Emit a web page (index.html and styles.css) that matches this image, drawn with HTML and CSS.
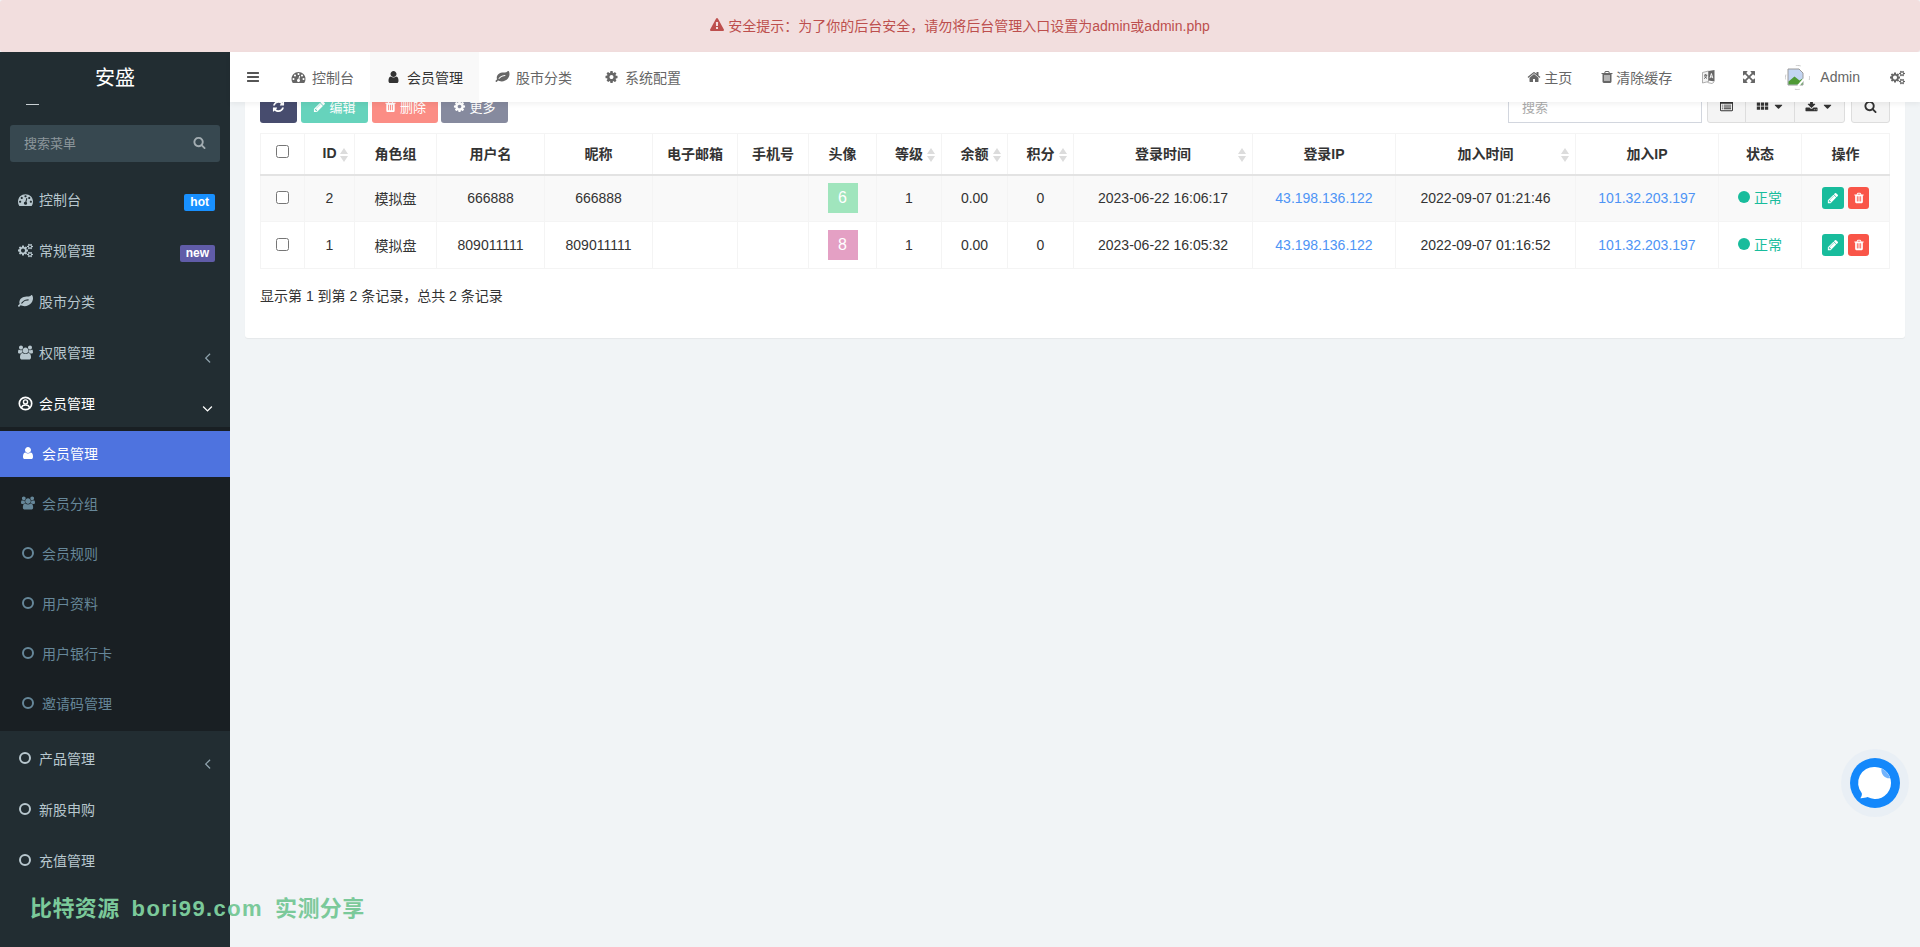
FILE: index.html
```html
<!DOCTYPE html>
<html lang="zh-CN">

<head>
    <meta charset="UTF-8">
    <title>会员管理</title>
    <link rel="stylesheet" href="styles.css">
</head>

<body>
    <svg class="sprite" xmlns="http://www.w3.org/2000/svg">
        <symbol id="i-search" viewBox="0 0 1792 1792"><path d="M1216 832q0-185-131.500-316.500t-316.500-131.500-316.500 131.500-131.500 316.500 131.500 316.500 316.500 131.500 316.500-131.500 131.500-316.500zm512 832q0 52-38 90t-90 38q-54 0-90-38l-343-342q-179 124-399 124-143 0-273.500-55.500t-225-150-150-225-55.500-273.500 55.500-273.500 150-225 225-150 273.500-55.500 273.500 55.500 225 150 150 225 55.500 273.500q0 220-124 399l343 343q37 37 37 90z"/></symbol>
        <symbol id="i-bars" viewBox="0 0 1792 1792"><path d="M1664 1344v128q0 26-19 45t-45 19h-1408q-26 0-45-19t-19-45v-128q0-26 19-45t45-19h1408q26 0 45 19t19 45zm0-512v128q0 26-19 45t-45 19h-1408q-26 0-45-19t-19-45v-128q0-26 19-45t45-19h1408q26 0 45 19t19 45zm0-512v128q0 26-19 45t-45 19h-1408q-26 0-45-19t-19-45v-128q0-26 19-45t45-19h1408q26 0 45 19t19 45z"/></symbol>
        <symbol id="i-user" viewBox="0 0 1792 1792"><path d="M1536 1399q0 109-62.500 187t-150.500 78h-854q-88 0-150.500-78t-62.500-187q0-85 8.500-160.500t31.500-152 58.500-131 94-89 134.500-34.500q131 128 313 128t313-128q76 0 134.500 34.500t94 89 58.500 131 31.500 152 8.500 160.500zm-256-887q0 159-112.500 271.500t-271.500 112.500-271.500-112.500-112.500-271.500 112.500-271.500 271.500-112.500 271.500 112.500 112.500 271.500z"/></symbol>
        <symbol id="i-home" viewBox="0 0 1792 1792"><path d="M1472 992v480q0 26-19 45t-45 19h-384v-384h-256v384h-384q-26 0-45-19t-19-45v-480q0-1 .5-3t.5-3l575-474 575 474q1 2 1 6zm223-69l-62 74q-8 9-21 11h-3q-13 0-21-7l-692-577-692 577q-12 8-24 7-13-2-21-11l-62-74q-8-10-7-23.500t11-21.500l719-599q32-26 76-26t76 26l244 204v-195q0-14 9-23t23-9h192q14 0 23 9t9 23v408l219 182q10 8 11 21.500t-7 23.500z"/></symbol>
        <symbol id="i-trash" viewBox="0 0 1792 1792"><path d="M704 1376v-704q0-14-9-23t-23-9h-64q-14 0-23 9t-9 23v704q0 14 9 23t23 9h64q14 0 23-9t9-23zm256 0v-704q0-14-9-23t-23-9h-64q-14 0-23 9t-9 23v704q0 14 9 23t23 9h64q14 0 23-9t9-23zm256 0v-704q0-14-9-23t-23-9h-64q-14 0-23 9t-9 23v704q0 14 9 23t23 9h64q14 0 23-9t9-23zm-544-992h448l-48-117q-7-9-17-11h-317q-10 2-17 11zm928 32v64q0 14-9 23t-23 9h-96v948q0 83-47 143.500t-113 60.500h-832q-66 0-113-58.500t-47-141.500v-952h-96q-14 0-23-9t-9-23v-64q0-14 9-23t23-9h309l70-167q15-37 54-63t79-26h320q40 0 79 26t54 63l70 167h309q14 0 23 9t9 23z"/></symbol>
        <symbol id="i-pencil" viewBox="0 0 1792 1792"><path d="M491 1536l91-91-235-235-91 91v107h128v128h107zm523-928q0-22-22-22-10 0-17 7l-542 542q-7 7-7 17 0 22 22 22 10 0 17-7l542-542q7-7 7-17zm-54-192l416 416-832 832h-416v-416zm683 96q0 53-37 90l-166 166-416-416 166-165q36-38 90-38 53 0 91 38l235 234q37 39 37 91z"/></symbol>
        <symbol id="i-caret" viewBox="0 0 1792 1792"><path d="M1408 704q0 26-19 45l-448 448q-19 19-45 19t-45-19l-448-448q-19-19-19-45t19-45 45-19h896q26 0 45 19t19 45z"/></symbol>
        <symbol id="i-left" viewBox="0 0 1792 1792"><path d="M1203 544q0 13-10 23l-393 393 393 393q10 10 10 23t-10 23l-50 50q-10 10-23 10t-23-10l-466-466q-10-10-10-23t10-23l466-466q10-10 23-10t23 10l50 50q10 10 10 23z"/></symbol>
        <symbol id="i-down" viewBox="0 0 1792 1792"><path d="M1395 736q0 13-10 23l-466 466q-10 10-23 10t-23-10l-466-466q-10-10-10-23t10-23l50-50q10-10 23-10t23 10l393 393 393-393q10-10 23-10t23 10l50 50q10 10 10 23z"/></symbol>
        <symbol id="i-warning" viewBox="0 0 1792 1792"><path d="M1024 1375v-190q0-14-9.500-23.500t-22.500-9.500h-192q-13 0-22.500 9.500t-9.500 23.500v190q0 14 9.500 23.500t22.500 9.500h192q13 0 22.500-9.500t9.500-23.500zm-2-374l18-459q0-12-10-19-13-11-24-11h-220q-11 0-24 11-10 7-10 21l17 457q0 10 10 16.500t24 6.500h185q14 0 23.500-6.500t10.500-16.500zm-14-934l768 1408q35 63-2 126-17 29-46.500 46t-63.500 17h-1536q-34 0-63.500-17t-46.500-46q-37-63-2-126l768-1408q17-31 47-49t65-18 65 18 47 49z"/></symbol>
        <symbol id="i-cog" viewBox="0 0 1792 1792"><path d="M1152 896q0-106-75-181t-181-75-181 75-75 181 75 181 181 75 181-75 75-181zm512-109v222q0 12-8 23t-20 13l-185 28q-19 54-39 91 35 50 107 138 10 12 10 25t-9 23q-27 37-99 108t-94 71q-12 0-26-9l-138-108q-44 23-91 38-16 136-29 186-7 28-36 28h-222q-14 0-24.500-8.500t-11.500-21.500l-28-184q-49-16-90-37l-141 107q-10 9-25 9-14 0-25-11-126-114-165-168-7-10-7-23 0-12 8-23 15-21 51-66.500t54-70.500q-27-50-41-99l-183-27q-13-2-21-12.500t-8-23.500v-222q0-12 8-23t19-13l186-28q14-46 39-92-40-57-107-138-10-12-10-24 0-10 9-23 26-36 98.500-107.500t94.500-71.500q13 0 26 10l138 107q44-23 91-38 16-136 29-186 7-28 36-28h222q14 0 24.500 8.500t11.500 21.500l28 184q49 16 90 37l142-107q9-9 24-9 13 0 25 10 129 119 165 170 7 8 7 22 0 12-8 23-15 21-51 66.500t-54 70.500q26 50 41 98l183 28q13 2 21 12.500t8 23.500z"/></symbol>
        <symbol id="i-users" viewBox="0 0 1920 1792"><path d="M593 896q-162 5-265 128h-134q-82 0-138-40.500t-56-118.500q0-353 124-353 6 0 43.500 21t97.500 42.500 119 21.500q67 0 133-23-5 37-5 66 0 139 81 256zm1071 637q0 120-73 189.500t-194 69.500h-874q-121 0-194-69.500t-73-189.500q0-53 3.500-103.500t14-109 26.500-108.500 43-97.500 62-81 85.500-53.500 111.500-20q10 0 43 21.500t73 48 107 48 135 21.500 135-21.500 107-48 73-48 43-21.500q61 0 111.500 20t85.500 53.500 62 81 43 97.500 26.500 108.500 14 109 3.500 103.500zm-1024-1277q0 106-75 181t-181 75-181-75-75-181 75-181 181-75 181 75 75 181zm704 384q0 159-112.500 271.500t-271.500 112.500-271.500-112.500-112.500-271.500 112.500-271.500 271.500-112.500 271.500 112.500 112.500 271.500zm576 225q0 78-56 118.500t-138 40.500h-134q-103-123-265-128 81-117 81-256 0-29-5-66 66 23 133 23 59 0 119-21.500t97.500-42.500 43.500-21q124 0 124 353zm-128-609q0 106-75 181t-181 75-181-75-75-181 75-181 181-75 181 75 75 181z"/></symbol>
        <symbol id="i-dash" viewBox="0 0 1792 1792"><path d="M384 1152q0-53-37.500-90.500t-90.500-37.500-90.500 37.500-37.500 90.500 37.500 90.500 90.500 37.500 90.500-37.500 37.500-90.500zm192-448q0-53-37.500-90.500t-90.500-37.500-90.500 37.500-37.500 90.500 37.500 90.500 90.500 37.500 90.500-37.500 37.500-90.500zm428 481l101-382q6-26-7.500-48.500t-38.500-29.500-48 6.500-30 39.500l-101 382q-60 5-107 43.500t-63 98.500q-20 77 20 146t117 89 146-20 89-117q16-60-6-117t-72-91zm660-33q0-53-37.500-90.500t-90.500-37.500-90.500 37.500-37.500 90.500 37.500 90.500 90.500 37.500 90.500-37.500 37.500-90.500zm-640-640q0-53-37.500-90.500t-90.500-37.500-90.500 37.500-37.500 90.500 37.500 90.500 90.500 37.500 90.500-37.500 37.500-90.500zm448 192q0-53-37.500-90.500t-90.500-37.500-90.500 37.500-37.500 90.500 37.500 90.500 90.500 37.500 90.500-37.500 37.500-90.500zm320 448q0 261-141 483-19 29-54 29h-1402q-35 0-54-29-141-221-141-483 0-182 71-348t191-286 286-191 348-71 348 71 286 191 191 286 71 348z"/></symbol>
        <symbol id="i-leaf" viewBox="0 0 1792 1792"><path d="M1280 704q0-26-19-45t-45-19q-172 0-318 49.500t-259.500 134-235.500 219.500q-19 21-19 45 0 26 19 45t45 19q24 0 45-19 27-24 74-71t67-66q137-124 268.500-176t313.500-52q26 0 45-19t19-45zm512-198q0 95-20 193-46 224-184.500 383t-357.500 268q-214 108-438 108-148 0-286-47-15-5-88-42t-96-37q-16 0-39.500 32t-45 70-52.500 70-60 32q-43 0-63.500-17.500t-45.500-59.500q-2-4-6-11t-5.500-10-3-9.500-1.500-13.500q0-35 31-73.500t68-65.500 68-56 31-48q0-4-14-38t-16-44q-9-51-9-104 0-115 43.500-220t119-184.500 170.500-139 204-95.500q55-18 145-25.500t179.500-9 178.500-6 163.500-24 113.500-56.500l29.500-29.500 29.500-28 27-20 36.500-16 43.500-4.500q39 0 70.500 46t47.500 112 24 124 8 96z"/></symbol>
        <symbol id="i-cogs" viewBox="0 0 1920 1792"><path d="M896 896q0-106-75-181t-181-75-181 75-75 181 75 181 181 75 181-75 75-181zm768 512q0-52-38-90t-90-38-90 38-38 90q0 53 37.500 90.500t90.500 37.500 90.500-37.500 37.500-90.500zm0-1024q0-52-38-90t-90-38-90 38-38 90q0 53 37.500 90.500t90.500 37.500 90.500-37.500 37.500-90.500zm-384 421v185q0 10-7 19.500t-16 10.500l-155 24q-11 35-32 76 34 48 90 115 7 11 7 20 0 12-7 19-23 30-82.500 89.500t-78.500 59.500q-11 0-21-7l-115-90q-37 19-77 31-11 108-23 155-7 24-30 24h-186q-11 0-20-7.500t-10-17.500l-23-153q-34-10-75-31l-118 89q-7 7-20 7-11 0-21-8-144-133-144-160 0-9 7-19 10-14 41-53t47-61q-23-44-35-82l-152-24q-10-1-17-9.500t-7-19.500v-185q0-10 7-19.500t16-10.500l155-24q11-35 32-76-34-48-90-115-7-11-7-20 0-12 7-20 22-30 82-89t79-59q11 0 21 7l115 90q34-18 77-32 11-108 23-154 7-24 30-24h186q11 0 20 7.500t10 17.500l23 153q34 10 75 31l118-89q8-7 20-7 11 0 21 8 144 133 144 160 0 8-7 19-12 16-42 54t-45 60q23 48 34 82l152 23q10 2 17 10.500t7 19.500zm640 533v140q0 16-149 31-12 27-30 52 51 113 51 138 0 4-4 7-122 71-124 71-8 0-46-47t-52-68q-20 2-30 2t-30-2q-14 21-52 68t-46 47q-2 0-124-71-4-3-4-7 0-25 51-138-18-25-30-52-149-15-149-31v-140q0-16 149-31 13-29 30-52-51-113-51-138 0-4 4-7 4-2 35-20t59-34 30-16q8 0 46 46.500t52 67.500q20-2 30-2t30 2q51-71 92-112l6-2q4 0 124 70 4 3 4 7 0 25-51 138 17 23 30 52 149 15 149 31zm0-1024v140q0 16-149 31-12 27-30 52 51 113 51 138 0 4-4 7-122 71-124 71-8 0-46-47t-52-68q-20 2-30 2t-30-2q-14 21-52 68t-46 47q-2 0-124-71-4-3-4-7 0-25 51-138-18-25-30-52-149-15-149-31v-140q0-16 149-31 13-29 30-52-51-113-51-138 0-4 4-7 4-2 35-20t59-34 30-16q8 0 46 46.500t52 67.500q20-2 30-2t30 2q51-71 92-112l6-2q4 0 124 70 4 3 4 7 0 25-51 138 17 23 30 52 149 15 149 31z"/></symbol>
        <symbol id="i-refresh" viewBox="0 0 1792 1792"><path d="M1639 1056q0 5-1 7-64 268-268 434.500t-478 166.500q-146 0-282.500-55t-243.500-157l-129 129q-19 19-45 19t-45-19-19-45v-448q0-26 19-45t45-19h448q26 0 45 19t19 45-19 45l-137 137q71 66 161 102t187 36q134 0 250-65t186-179q11-17 53-117 8-23 30-23h192q13 0 22.500 9.500t9.500 22.500zm25-800v448q0 26-19 45t-45 19h-448q-26 0-45-19t-19-45 19-45l138-138q-148-137-349-137-134 0-250 65t-186 179q-11 17-53 117-8 23-30 23h-199q-13 0-22.500-9.500t-9.500-22.500v-7q65-268 270-434.500t480-166.500q146 0 284 55.500t245 156.500l130-129q19-19 45-19t45 19 19 45z"/></symbol>
        <symbol id="i-list" viewBox="0 0 1792 1792"><path d="M384 1184v64q0 13-9.500 22.500t-22.500 9.500h-64q-13 0-22.500-9.500t-9.500-22.500v-64q0-13 9.500-22.500t22.500-9.500h64q13 0 22.500 9.500t9.500 22.500zm0-256v64q0 13-9.500 22.500t-22.500 9.500h-64q-13 0-22.500-9.500t-9.500-22.500v-64q0-13 9.500-22.500t22.500-9.500h64q13 0 22.500 9.500t9.500 22.500zm0-256v64q0 13-9.500 22.500t-22.500 9.500h-64q-13 0-22.500-9.500t-9.500-22.500v-64q0-13 9.500-22.500t22.500-9.500h64q13 0 22.500 9.500t9.500 22.500zm1152 512v64q0 13-9.500 22.500t-22.500 9.500h-960q-13 0-22.500-9.500t-9.500-22.500v-64q0-13 9.500-22.500t22.500-9.500h960q13 0 22.500 9.500t9.500 22.500zm0-256v64q0 13-9.500 22.500t-22.500 9.500h-960q-13 0-22.500-9.500t-9.500-22.500v-64q0-13 9.500-22.500t22.500-9.500h960q13 0 22.500 9.500t9.500 22.500zm0-256v64q0 13-9.500 22.500t-22.500 9.500h-960q-13 0-22.500-9.500t-9.500-22.500v-64q0-13 9.500-22.500t22.500-9.500h960q13 0 22.500 9.500t9.500 22.500zm128 704v-832q0-13-9.500-22.500t-22.500-9.500h-1472q-13 0-22.500 9.500t-9.500 22.500v832q0 13 9.500 22.500t22.500 9.500h1472q13 0 22.500-9.500t9.500-22.500zm128-1088v1088q0 66-47 113t-113 47h-1472q-66 0-113-47t-47-113v-1088q0-66 47-113t113-47h1472q66 0 113 47t47 113z"/></symbol>
        <symbol id="i-th" viewBox="0 0 16 16"><path d="M1 3h4v4h-4zM6 3h4v4h-4zM11 3h4v4h-4zM1 8h4v4h-4zM6 8h4v4h-4zM11 8h4v4h-4z"/></symbol>
        <symbol id="i-download" viewBox="0 0 1792 1792"><path d="M1344 1344q0-26-19-45t-45-19-45 19-19 45 19 45 45 19 45-19 19-45zm256 0q0-26-19-45t-45-19-45 19-19 45 19 45 45 19 45-19 19-45zm128-224v320q0 40-28 68t-68 28h-1472q-40 0-68-28t-28-68v-320q0-40 28-68t68-28h465l135 136q58 56 136 56t136-56l136-136h464q40 0 68 28t28 68zm-325-569q17 41-14 70l-448 448q-18 19-45 19t-45-19l-448-448q-31-29-14-70 17-39 59-39h256v-448q0-26 19-45t45-19h256q26 0 45 19t19 45v448h256q42 0 59 39z"/></symbol>
        <symbol id="i-expand" viewBox="0 0 1792 1792"><path d="M1283 541l-355 355 355 355 144-144q29-31 70-14 39 17 39 59v448q0 26-19 45t-45 19h-448q-42 0-59-40-17-39 14-69l144-144-355-355-355 355 144 144q31 30 14 69-17 40-59 40h-448q-26 0-45-19t-19-45v-448q0-42 40-59 39-17 69 14l144 144 355-355-355-355-144 144q-19 19-45 19-12 0-24-5-40-17-40-59v-448q0-26 19-45t45-19h448q42 0 59 40 17 39-14 69l-144 144 355 355 355-355-144-144q-31-30-14-69 17-40 59-40h448q26 0 45 19t19 45v448q0 42-39 59-13 5-25 5-26 0-45-19z"/></symbol>
        <symbol id="i-lang" viewBox="0 0 13 14">
            <path d="M.5 2.500l6-1.500v10.500l-6 1.500z" fill="#f2f2f2" stroke="#9a9a9a" stroke-width=".8"/>
            <path d="M2 5.200h3.200M3.600 4.200v1M4.700 5.400c-.5 1.600-1.500 2.600-2.700 3.200M2.700 6.200c.4 1 1.200 1.800 2.300 2.200" fill="none" stroke="#555" stroke-width=".9"/>
            <path d="M6.500 1l6-1v11.500l-6-.9z" fill="#666"/>
            <path d="M8 8.200l1.400-4.700 1.400 4.700M8.500 6.900h1.800" fill="none" stroke="#fff" stroke-width=".9"/>
            <path d="M5.500 12.500l4.500 1 2-1.500" fill="none" stroke="#9a9a9a" stroke-width=".8"/>
        </symbol>
        <symbol id="i-user-circle" viewBox="0 0 16 16">
            <circle cx="8" cy="8" r="6.600" fill="none" stroke="currentColor" stroke-width="1.800"/>
            <circle cx="8" cy="6.300" r="2.200" fill="none" stroke="currentColor" stroke-width="1.500"/>
            <path d="M3.600 12.600c.5-2 2.300-3 4.400-3s3.900 1 4.400 3" fill="none" stroke="currentColor" stroke-width="1.600"/>
        </symbol>
        <symbol id="i-ring" viewBox="0 0 12 12"><circle cx="6" cy="6" r="5" fill="none" stroke="currentColor" stroke-width="2"/></symbol>
        <symbol id="i-sort" viewBox="0 0 8 14"><path d="M4 0l4 6h-8zM4 14l-4-6h8z"/></symbol>
    </svg>

    <div class="alert">
        <svg class="ico ico-14"><use href="#i-warning"/></svg>
        <span>安全提示：为了你的后台安全，请勿将后台管理入口设置为admin或admin.php</span>
    </div>

    <div class="wrapper">
        <aside class="sidebar">
            <div class="logo">安盛</div>
            <div class="panel-cut"></div>
            <div class="menu-search">
                <span>搜索菜单</span>
                <svg class="ico ico-13"><use href="#i-search"/></svg>
            </div>
            <ul class="menu">
                <li class="menu-item">
                    <svg class="ico ico-15"><use href="#i-dash"/></svg><span>控制台</span>
                    <em class="tag tag-hot">hot</em>
                </li>
                <li class="menu-item">
                    <svg class="ico ico-15"><use href="#i-cogs"/></svg><span>常规管理</span>
                    <em class="tag tag-new">new</em>
                </li>
                <li class="menu-item">
                    <svg class="ico ico-15"><use href="#i-leaf"/></svg><span>股市分类</span>
                </li>
                <li class="menu-item">
                    <svg class="ico ico-15"><use href="#i-users"/></svg><span>权限管理</span>
                    <svg class="ico angle"><use href="#i-left"/></svg>
                </li>
                <li class="menu-item open">
                    <svg class="ico ico-15"><use href="#i-user-circle"/></svg><span>会员管理</span>
                    <svg class="ico angle"><use href="#i-down"/></svg>
                </li>
                <li>
                    <ul class="submenu">
                        <li class="sub-item active"><svg class="ico ico-14"><use href="#i-user"/></svg><span>会员管理</span></li>
                        <li class="sub-item"><svg class="ico ico-14"><use href="#i-users"/></svg><span>会员分组</span></li>
                        <li class="sub-item"><svg class="ico ico-12"><use href="#i-ring"/></svg><span>会员规则</span></li>
                        <li class="sub-item"><svg class="ico ico-12"><use href="#i-ring"/></svg><span>用户资料</span></li>
                        <li class="sub-item"><svg class="ico ico-12"><use href="#i-ring"/></svg><span>用户银行卡</span></li>
                        <li class="sub-item"><svg class="ico ico-12"><use href="#i-ring"/></svg><span>邀请码管理</span></li>
                    </ul>
                </li>
                <li class="menu-item">
                    <svg class="ico ico-12"><use href="#i-ring"/></svg><span>产品管理</span>
                    <svg class="ico angle"><use href="#i-left"/></svg>
                </li>
                <li class="menu-item"><svg class="ico ico-12"><use href="#i-ring"/></svg><span>新股申购</span></li>
                <li class="menu-item"><svg class="ico ico-12"><use href="#i-ring"/></svg><span>充值管理</span></li>
            </ul>
        </aside>

        <main class="main">
            <header class="topbar">
                <a class="toggle"><svg class="ico ico-14"><use href="#i-bars"/></svg></a>
                <a class="tab"><svg class="ico ico-14"><use href="#i-dash"/></svg><span>控制台</span></a>
                <a class="tab current"><svg class="ico ico-14"><use href="#i-user"/></svg><span>会员管理</span></a>
                <a class="tab"><svg class="ico ico-14"><use href="#i-leaf"/></svg><span>股市分类</span></a>
                <a class="tab"><svg class="ico ico-14"><use href="#i-cog"/></svg><span>系统配置</span></a>
                <nav class="top-right">
                    <a class="top-link top-home"><svg class="ico ico-14"><use href="#i-home"/></svg><span>主页</span></a>
                    <a class="top-link top-clear"><svg class="ico ico-14"><use href="#i-trash"/></svg><span>清除缓存</span></a>
                    <a class="top-link"><svg class="ico lang"><use href="#i-lang"/></svg></a>
                    <a class="top-link top-full"><svg class="ico ico-14"><use href="#i-expand"/></svg></a>
                    <a class="top-link user">
                        <svg class="avatar-broken" viewBox="0 0 25 25">
                            <circle cx="12.500" cy="12.500" r="12" fill="#fff" stroke="#c8c8c8" stroke-dasharray="5 14" stroke-dashoffset="2.500" pathLength="75"/>
                            <path d="M3 4h11l4 4v12h-15z" fill="#c3d5f2" stroke="#9a9a9a"/>
                            <path d="M3.500 19.500v-3l6-5 5 4 3-2v6z" fill="#4f9a35"/>
                            <path d="M13 21l6-7" stroke="#fff" stroke-width="2"/>
                        </svg>
                        <span>Admin</span>
                    </a>
                    <a class="top-link"><svg class="ico ico-15"><use href="#i-cogs"/></svg></a>
                </nav>
            </header>

            <section class="content">
                <div class="toolbar">
                    <a class="btn btn-refresh"><svg class="ico ico-13"><use href="#i-refresh"/></svg></a>
                    <a class="btn btn-edit"><svg class="ico ico-13"><use href="#i-pencil"/></svg>编辑</a>
                    <a class="btn btn-del"><svg class="ico ico-13"><use href="#i-trash"/></svg>删除</a>
                    <a class="btn btn-more"><svg class="ico ico-13"><use href="#i-cog"/></svg>更多</a>
                    <div class="toolbar-right">
                        <div class="search-input">搜索</div>
                        <div class="btn-group">
                            <a class="tool tool-list"><svg class="ico ico-13"><use href="#i-list"/></svg></a>
                            <a class="tool tool-th"><svg class="ico ico-13"><use href="#i-th"/></svg><svg class="ico caret"><use href="#i-caret"/></svg></a>
                            <a class="tool tool-th"><svg class="ico ico-13"><use href="#i-download"/></svg><svg class="ico caret"><use href="#i-caret"/></svg></a>
                        </div>
                        <a class="tool tool-search"><svg class="ico ico-13"><use href="#i-search"/></svg></a>
                    </div>
                </div>

                <table class="grid">
                    <colgroup>
                        <col><col><col><col><col><col><col><col><col><col><col><col><col><col><col><col><col>
                    </colgroup>
                    <thead>
                        <tr>
                            <th><input type="checkbox"></th>
                            <th>ID<svg class="sort"><use href="#i-sort"/></svg></th>
                            <th>角色组</th>
                            <th>用户名</th>
                            <th>昵称</th>
                            <th>电子邮箱</th>
                            <th>手机号</th>
                            <th>头像</th>
                            <th>等级<svg class="sort"><use href="#i-sort"/></svg></th>
                            <th>余额<svg class="sort"><use href="#i-sort"/></svg></th>
                            <th>积分<svg class="sort"><use href="#i-sort"/></svg></th>
                            <th>登录时间<svg class="sort"><use href="#i-sort"/></svg></th>
                            <th>登录IP</th>
                            <th>加入时间<svg class="sort"><use href="#i-sort"/></svg></th>
                            <th>加入IP</th>
                            <th>状态</th>
                            <th>操作</th>
                        </tr>
                    </thead>
                    <tbody>
                        <tr>
                            <td><input type="checkbox"></td>
                            <td>2</td>
                            <td>模拟盘</td>
                            <td>666888</td>
                            <td>666888</td>
                            <td></td>
                            <td></td>
                            <td><span class="letter letter-green">6</span></td>
                            <td>1</td>
                            <td>0.00</td>
                            <td>0</td>
                            <td>2023-06-22 16:06:17</td>
                            <td><a class="ip">43.198.136.122</a></td>
                            <td>2022-09-07 01:21:46</td>
                            <td><a class="ip">101.32.203.197</a></td>
                            <td><span class="state"><i class="dot"></i>正常</span></td>
                            <td>
                                <div class="ops">
                                    <a class="op op-edit"><svg class="ico ico-12"><use href="#i-pencil"/></svg></a>
                                    <a class="op op-del"><svg class="ico ico-12"><use href="#i-trash"/></svg></a>
                                </div>
                            </td>
                        </tr>
                        <tr>
                            <td><input type="checkbox"></td>
                            <td>1</td>
                            <td>模拟盘</td>
                            <td>809011111</td>
                            <td>809011111</td>
                            <td></td>
                            <td></td>
                            <td><span class="letter letter-pink">8</span></td>
                            <td>1</td>
                            <td>0.00</td>
                            <td>0</td>
                            <td>2023-06-22 16:05:32</td>
                            <td><a class="ip">43.198.136.122</a></td>
                            <td>2022-09-07 01:16:52</td>
                            <td><a class="ip">101.32.203.197</a></td>
                            <td><span class="state"><i class="dot"></i>正常</span></td>
                            <td>
                                <div class="ops">
                                    <a class="op op-edit"><svg class="ico ico-12"><use href="#i-pencil"/></svg></a>
                                    <a class="op op-del"><svg class="ico ico-12"><use href="#i-trash"/></svg></a>
                                </div>
                            </td>
                        </tr>
                    </tbody>
                </table>

                <p class="pager">显示第 1 到第 2 条记录，总共 2 条记录</p>
            </section>
        </main>
    </div>

    <div class="watermark"><span>比特资源</span><span class="wm-url">bori99.com</span><span>实测分享</span></div>

    <div class="chat">
        <svg viewBox="0 0 50 50" class="chat-icon">
            <circle cx="25" cy="25" r="25" fill="#1488fb"/>
            <path d="M25 9a16 16 0 1 1-7.500 30.100c-2 .8-4.500 1.200-7.200 1.100 1.300-1.500 1.800-3.200 1.500-5A16 16 0 0 1 25 9z" fill="#fff"/>
            <path d="M31.500 10.400a16 16 0 0 1 8.700 9.800c-4.800.8-9.800-4.200-8.700-9.800z" fill="#72b3fc"/>
        </svg>
    </div>
</body>

</html>
```

FILE: styles.css
```css
* {
    box-sizing: border-box;
}

html,
body {
    margin: 0;
    height: 947px;
    overflow: hidden;
}

body {
    position: relative;
    font-family: "Liberation Sans", "Noto Sans CJK SC", sans-serif;
    font-size: 14px;
    color: #333;
    background: #f1f4f6;
}

ul {
    list-style: none;
    margin: 0;
    padding: 0;
}

.sprite {
    display: none;
}

.ico {
    display: inline-block;
    flex: none;
    fill: currentColor;
}

.ico-12 {
    width: 12px;
    height: 12px;
}

.ico-13 {
    width: 13px;
    height: 13px;
}

.ico-14 {
    width: 14px;
    height: 14px;
}

.ico-15 {
    width: 15px;
    height: 15px;
}

/* top warning */
.alert {
    height: 52px;
    padding-bottom: 2px;
    display: flex;
    align-items: center;
    justify-content: center;
    gap: 4px;
    color: #bd4f4d;
    background: #f2dede;
    border-radius: 3px;
}

.wrapper {
    display: flex;
    height: 895px;
}

/* sidebar */
.sidebar {
    width: 230px;
    flex: none;
    background: #222d32;
    color: #b8c7ce;
}

.logo {
    height: 50px;
    line-height: 52px;
    text-align: center;
    font-size: 20px;
    color: #fff;
}

.panel-cut {
    width: 13px;
    height: 1px;
    margin: 2px 0 0 26px;
    background: #c9d0d4;
}

.menu-search {
    display: flex;
    align-items: center;
    justify-content: space-between;
    height: 37px;
    margin: 20px 10px 10px;
    padding: 0 14px 2px;
    font-size: 13px;
    color: #8d979c;
    background: #374850;
    border-radius: 3px;
}

.menu-search .ico {
    color: #a3adb2;
}

.menu-item {
    display: flex;
    align-items: center;
    height: 51px;
    padding: 3px 14px 0 18px;
}

.menu-item > .ico:first-child {
    margin-right: 6px;
}

.menu-item > .ico-12:first-child {
    margin: 0 8px 0 1px;
}

.menu-item.open {
    color: #fff;
}

.angle {
    width: 17px;
    height: 17px;
    margin-left: auto;
    transform: translateY(5px);
    color: #8fa3ad;
}

.open .angle {
    color: #fff;
}

.tag {
    margin-left: auto;
    margin-right: 1px;
    height: 17px;
    line-height: 17px;
    padding: 0 6px;
    font-style: normal;
    font-weight: bold;
    font-size: 12px;
    color: #fff;
    border-radius: 2px;
    transform: translateY(3px);
}

.tag-hot {
    background: #1890ff;
}

.tag-new {
    background: #605ca8;
}

.submenu {
    padding: 4px 0;
    background: #191f23;
}

.sub-item {
    display: flex;
    align-items: center;
    height: 46px;
    margin-bottom: 4px;
    padding: 0 0 2px 21px;
    color: #668799;
}

.sub-item:last-child {
    margin-bottom: 0;
}

.sub-item .ico {
    margin-right: 7px;
}

.sub-item .ico-12 {
    margin: 0 8px 0 1px;
}

.sub-item.active {
    color: #fff;
    background: #4e73df;
}

/* main column */
.main {
    flex: 1;
    min-width: 0;
    display: flex;
    flex-direction: column;
}

.topbar {
    position: relative;
    z-index: 2;
    display: flex;
    align-items: center;
    height: 50px;
    color: #666;
    background: #fff;
    box-shadow: 0 2px 5px rgba(0, 0, 0, 0.06);
}

.toggle {
    display: flex;
    align-items: center;
    width: 45px;
    padding-left: 16px;
    color: #555;
}

.tab {
    display: flex;
    align-items: center;
    height: 50px;
    padding: 0 16px 0 15px;
    gap: 5px;
}

.tab .ico {
    width: 17px;
}

.tab.current {
    color: #333;
    background: #f9f9f9;
}

.top-right {
    display: flex;
    align-items: center;
    margin-left: auto;
}

.top-link {
    display: flex;
    align-items: center;
    gap: 4px;
    height: 50px;
    padding: 0 15px;
}

.top-home {
    gap: 3px;
    padding-left: 16px;
}

.top-clear {
    gap: 2px;
    padding-left: 13px;
}

.top-full {
    padding: 0 13px;
}

.lang {
    width: 13px;
    height: 14px;
}

.user {
    gap: 10px;
}

.avatar-broken {
    width: 25px;
    height: 25px;
}

.content {
    width: 1660px;
    height: 236px;
    margin-left: 15px;
    padding: 0 15px;
    background: #fff;
    border-radius: 0 0 3px 3px;
    box-shadow: 0 1px 1px rgba(0, 0, 0, 0.05);
}

/* toolbar is scrolled under the topbar */
.toolbar {
    display: flex;
    align-items: flex-end;
    gap: 4px;
    height: 21px;
    overflow: hidden;
}

.btn {
    display: flex;
    flex: none;
    align-items: center;
    justify-content: center;
    gap: 3px;
    height: 31px;
    padding-bottom: 2px;
    font-size: 13px;
    color: #fff;
    border-radius: 3px;
}

.btn-refresh {
    width: 37px;
    background: #474c6e;
}

.btn-edit {
    width: 67px;
    background: #66d3bc;
}

.btn-del {
    width: 66px;
    background: #fb8d85;
}

.btn-more {
    width: 67px;
    margin-left: -1px;
    background: #868a9e;
}

.toolbar-right {
    display: flex;
    align-items: flex-end;
    margin-left: auto;
}

.search-input {
    display: flex;
    align-items: center;
    width: 194px;
    height: 31px;
    padding: 0 0 2px 13px;
    font-size: 13px;
    color: #aaa;
    background: #fff;
    border: 1px solid #d2d6de;
}

.btn-group {
    display: flex;
    margin-left: 5px;
}

.tool {
    display: flex;
    align-items: center;
    justify-content: center;
    gap: 3px;
    height: 31px;
    padding-bottom: 2px;
    color: #333;
    background: #f4f4f4;
    border: 1px solid #ddd;
}

.tool-list {
    width: 39px;
    border-radius: 3px 0 0 3px;
}

.tool-th {
    width: 50px;
    margin-left: -1px;
}

.tool-th:last-child {
    width: 51px;
    border-radius: 0 3px 3px 0;
}

.tool-search {
    width: 39px;
    margin-left: 6px;
    border-radius: 3px;
}

.caret {
    width: 13px;
    height: 13px;
}

/* table */
.grid {
    width: 1630px;
    margin-top: 10px;
    table-layout: fixed;
    border-collapse: collapse;
    color: #333;
}

.grid col:nth-child(1) { width: 44px; }
.grid col:nth-child(2) { width: 50px; }
.grid col:nth-child(3) { width: 82px; }
.grid col:nth-child(4) { width: 108px; }
.grid col:nth-child(5) { width: 108px; }
.grid col:nth-child(6) { width: 85px; }
.grid col:nth-child(7) { width: 71px; }
.grid col:nth-child(8) { width: 68px; }
.grid col:nth-child(9) { width: 65px; }
.grid col:nth-child(10) { width: 66px; }
.grid col:nth-child(11) { width: 66px; }
.grid col:nth-child(12) { width: 179px; }
.grid col:nth-child(13) { width: 143px; }
.grid col:nth-child(14) { width: 180px; }
.grid col:nth-child(15) { width: 143px; }
.grid col:nth-child(16) { width: 83px; }
.grid col:nth-child(17) { width: 88px; }

.grid th,
.grid td {
    padding: 0;
    text-align: center;
    border: 1px solid #f4f4f4;
}

.grid th {
    position: relative;
    height: 41px;
    padding-bottom: 2px;
    font-weight: bold;
    border-bottom: 2px solid #e3e3e3;
}

.grid td {
    height: 47px;
}

.grid tbody tr:nth-child(odd) {
    background: #f9f9f9;
}

.grid input {
    display: block;
    margin: -2px auto 0;
    width: 13px;
    height: 13px;
}

.sort {
    position: absolute;
    top: 14px;
    right: 6px;
    width: 8px;
    height: 14px;
    fill: #dcdcdc;
}

.letter {
    display: block;
    width: 30px;
    height: 30px;
    margin: 0 auto;
    line-height: 30px;
    font-size: 16px;
    color: #fff;
}

.letter-green {
    background: #a0e5bd;
}

.letter-pink {
    background: #e4a0c4;
}

.ip {
    color: #4e94f5;
}

.state {
    display: inline-flex;
    align-items: center;
    gap: 4px;
    padding-bottom: 2px;
    color: #18bc9c;
}

.dot {
    width: 12px;
    height: 12px;
    background: #18bc9c;
    border-radius: 50%;
}

.ops {
    display: flex;
    justify-content: center;
    gap: 4px;
}

.op {
    display: flex;
    align-items: center;
    justify-content: center;
    height: 22px;
    color: #fff;
    border-radius: 3px;
}

.op-edit {
    width: 22px;
    background: #18bc9c;
}

.op-del {
    width: 21px;
    background: #f95548;
}

.pager {
    margin: 17px 0 0;
    line-height: 20px;
}

/* overlays */
.watermark {
    position: absolute;
    left: 30px;
    top: 893px;
    display: flex;
    gap: 12px;
    font-size: 22px;
    line-height: 32px;
    font-weight: bold;
    letter-spacing: 0.4px;
    color: #7bc99a;
}

.wm-url {
    letter-spacing: 1.4px;
}

.chat {
    position: absolute;
    left: 1841px;
    top: 749px;
    display: flex;
    align-items: center;
    justify-content: center;
    width: 68px;
    height: 68px;
    background: #e9eff5;
    border-radius: 50%;
}

.chat-icon {
    width: 50px;
    height: 50px;
}
```
